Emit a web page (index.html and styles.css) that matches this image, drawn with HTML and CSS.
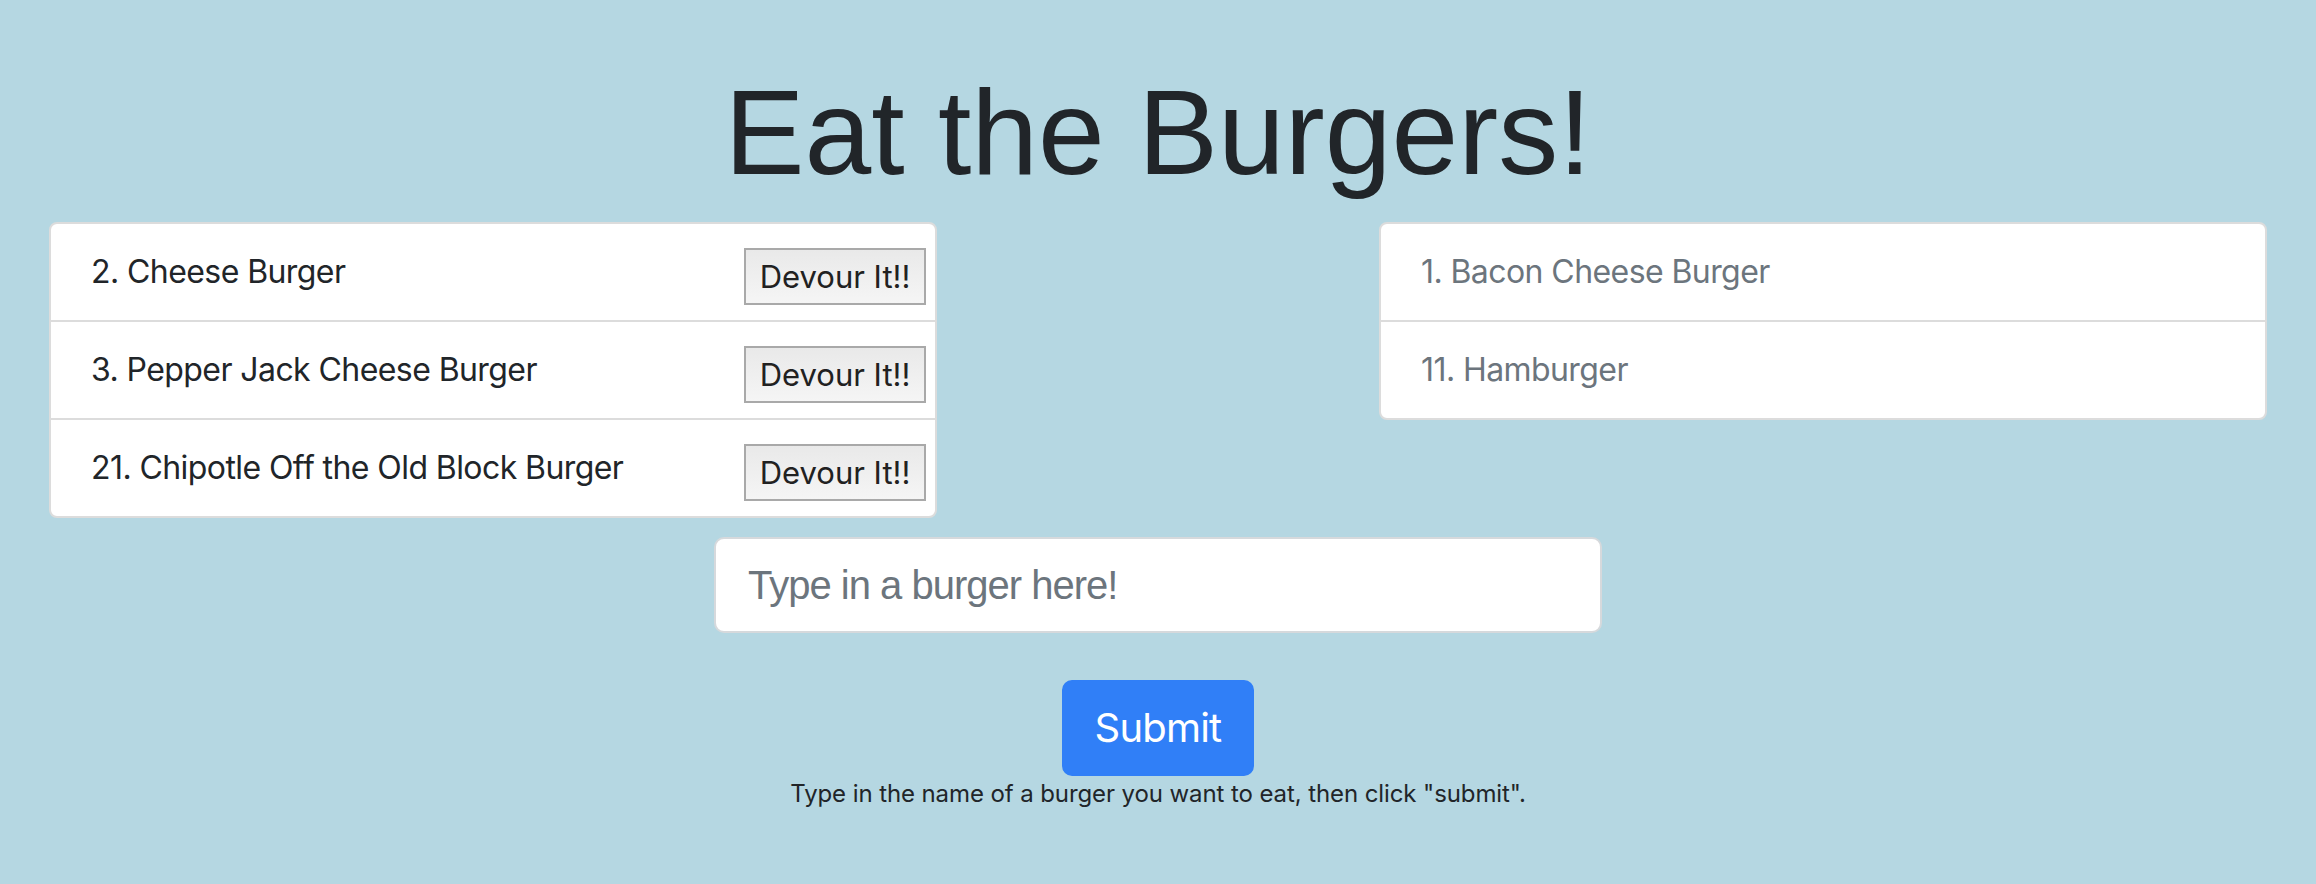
FILE: index.html
```html
<!DOCTYPE html>
<html lang="en">
<head>
<meta charset="utf-8">
<title>Eat the Burgers!</title>
<link rel="stylesheet" href="styles.css">
</head>
<body>
<main class="page">
  <h1 class="title">Eat the Burgers!</h1>
  <div class="lists">
    <ul class="list">
      <li class="item"><span>2. Cheese Burger</span><button class="devour" type="button">Devour It!!</button></li>
      <li class="item"><span>3. Pepper Jack Cheese Burger</span><button class="devour" type="button">Devour It!!</button></li>
      <li class="item"><span>21. Chipotle Off the Old Block Burger</span><button class="devour" type="button">Devour It!!</button></li>
    </ul>
    <ul class="list list-eaten">
      <li class="item"><span>1. Bacon Cheese Burger</span></li>
      <li class="item"><span>11. Hamburger</span></li>
    </ul>
  </div>
  <form class="form">
    <input class="burger-input" type="text" placeholder="Type in a burger here!">
    <button class="submit" type="button">Submit</button>
    <p class="help">Type in the name of a burger you want to eat, then click "submit".</p>
  </form>
</main>
</body>
</html>
```

FILE: styles.css
```css
html, body {
  margin: 0;
  padding: 0;
}
body {
  background: #b5d7e2;
  color: #212529;
  font-family: Inter, Roboto, "Noto Sans", sans-serif;
  width: 2316px;
  height: 884px;
  overflow: hidden;
}
.page {
  padding: 60px 49px 0;
}
.title {
  margin: 0 0 18px;
  font-family: "Liberation Sans", Arial, sans-serif;
  font-weight: 400;
  font-size: 120px;
  line-height: 144px;
  text-align: center;
  color: #212529;
}
.lists {
  display: flex;
  justify-content: space-between;
  align-items: flex-start;
}
.list {
  list-style: none;
  margin: 0;
  padding: 0;
  width: 888px;
  background: #fff;
  border: 2px solid #dcdcdc;
  border-radius: 8px;
  box-sizing: border-box;
}
.item {
  display: flex;
  align-items: flex-start;
  justify-content: space-between;
  padding: 24px 9px 24px 40px;
  font-size: 32px;
  line-height: 48px;
  letter-spacing: -0.018em;
}
.item + .item {
  border-top: 2px solid #dcdcdc;
}
.list-eaten .item {
  color: #6c757d;
}
.devour {
  box-sizing: border-box;
  width: 182px;
  height: 57px;
  margin: 0 0 -9px auto;
  padding: 0;
  font-family: inherit;
  font-size: 31px;
  letter-spacing: 0;
  color: #212121;
  background: linear-gradient(#e9e9e9, #f5f5f5);
  border: 2px solid #a9a9a9;
  border-radius: 0;
}
.form {
  display: flex;
  flex-direction: column;
  align-items: center;
  margin-top: 19px;
}
.burger-input {
  box-sizing: border-box;
  width: 888px;
  height: 96px;
  padding: 16px 32px;
  font-family: "Liberation Sans", Arial, sans-serif;
  font-size: 40px;
  letter-spacing: -1px;
  color: #495057;
  background: #fff;
  border: 2px solid #d6d9dc;
  border-radius: 10px;
  outline: none;
}
.burger-input::placeholder {
  color: #6c757d;
}
.submit {
  box-sizing: border-box;
  margin-top: 47px;
  width: 192px;
  height: 96px;
  padding: 16px 0;
  font-family: inherit;
  font-size: 40px;
  line-height: 60px;
  letter-spacing: -0.02em;
  color: #fff;
  background: #307ff7;
  border: 2px solid #307ff7;
  border-radius: 10px;
}
.help {
  margin: 0;
  font-size: 24px;
  line-height: 36px;
  letter-spacing: -0.004em;
  color: #212529;
}
```
